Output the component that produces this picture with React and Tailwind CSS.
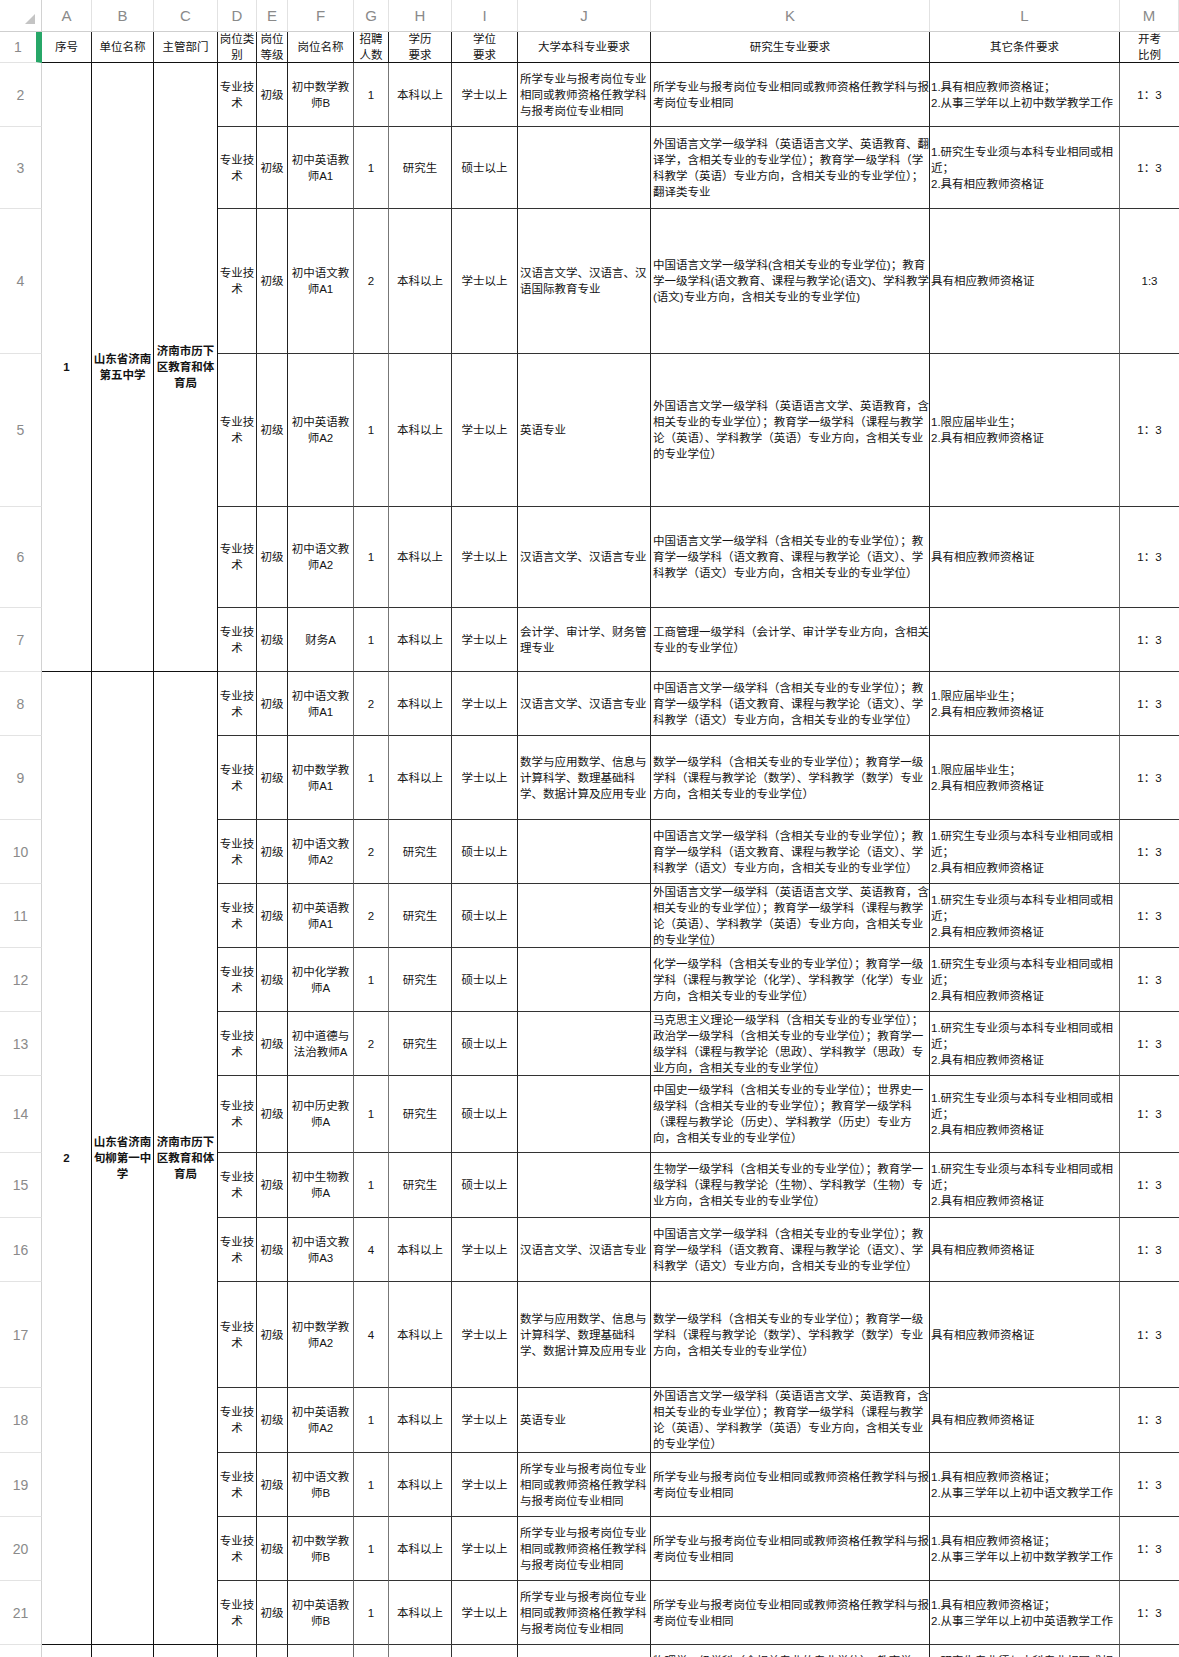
import React from 'react';

// repeated requirement texts
const SAME = '所学专业与报考岗位专业相同或教师资格任教学科与报考岗位专业相同';
const CN = '中国语言文学一级学科（含相关专业的专业学位）；教育学一级学科（语文教育、课程与教学论（语文）、学科教学（语文）专业方向，含相关专业的专业学位）';
const EN = '外国语言文学一级学科（英语语言文学、英语教育，含相关专业的专业学位）；教育学一级学科（课程与教学论（英语）、学科教学（英语）专业方向，含相关专业的专业学位）';
const MATH = '数学一级学科（含相关专业的专业学位）；教育学一级学科（课程与教学论（数学）、学科教学（数学）专业方向，含相关专业的专业学位）';
const MATH_J = '数学与应用数学、信息与计算科学、数理基础科学、数据计算及应用专业';
const CERT = '具有相应教师资格证';
const FRESH = '1.限应届毕业生；\n2.具有相应教师资格证';
const GRAD = '1.研究生专业须与本科专业相同或相近；\n2.具有相应教师资格证';

const BK = ['本科以上', '学士以上'];
const YJS = ['研究生', '硕士以上'];

const row = (n, f, g, edu, j, k, l, m = '1：3') => ({ n, d: '专业技术', e: '初级', f, g, h: edu[0], i: edu[1], j, k, l, m });

const groups = [
  {
    id: '1',
    unit: '山东省济南第五中学',
    dept: '济南市历下区教育和体育局',
    span: 'row-span-6',
    rows: [
      row(2, '初中数学教师B', '1', BK, SAME, SAME, '1.具有相应教师资格证；\n2.从事三学年以上初中数学教学工作'),
      row(3, '初中英语教师A1', '1', YJS, '', '外国语言文学一级学科（英语语言文学、英语教育、翻译学，含相关专业的专业学位）；教育学一级学科（学科教学（英语）专业方向，含相关专业的专业学位）；翻译类专业', GRAD),
      row(4, '初中语文教师A1', '2', BK, '汉语言文学、汉语言、汉语国际教育专业', '中国语言文学一级学科(含相关专业的专业学位)；教育学一级学科(语文教育、课程与教学论(语文)、学科教学(语文)专业方向，含相关专业的专业学位)', CERT, '1:3'),
      row(5, '初中英语教师A2', '1', BK, '英语专业', EN, FRESH),
      row(6, '初中语文教师A2', '1', BK, '汉语言文学、汉语言专业', CN, CERT),
      row(7, '财务A', '1', BK, '会计学、审计学、财务管理专业', '工商管理一级学科（会计学、审计学专业方向，含相关专业的专业学位）', ''),
    ],
  },
  {
    id: '2',
    unit: '山东省济南旬柳第一中学',
    dept: '济南市历下区教育和体育局',
    span: 'row-span-14',
    rows: [
      row(8, '初中语文教师A1', '2', BK, '汉语言文学、汉语言专业', CN, FRESH),
      row(9, '初中数学教师A1', '1', BK, MATH_J, MATH, FRESH),
      row(10, '初中语文教师A2', '2', YJS, '', CN, GRAD),
      row(11, '初中英语教师A1', '2', YJS, '', EN, GRAD),
      row(12, '初中化学教师A', '1', YJS, '', '化学一级学科（含相关专业的专业学位）；教育学一级学科（课程与教学论（化学）、学科教学（化学）专业方向，含相关专业的专业学位）', GRAD),
      row(13, '初中道德与法治教师A', '2', YJS, '', '马克思主义理论一级学科（含相关专业的专业学位）；政治学一级学科（含相关专业的专业学位）；教育学一级学科（课程与教学论（思政）、学科教学（思政）专业方向，含相关专业的专业学位）', GRAD),
      row(14, '初中历史教师A', '1', YJS, '', '中国史一级学科（含相关专业的专业学位）；世界史一级学科（含相关专业的专业学位）；教育学一级学科（课程与教学论（历史）、学科教学（历史）专业方向，含相关专业的专业学位）', GRAD),
      row(15, '初中生物教师A', '1', YJS, '', '生物学一级学科（含相关专业的专业学位）；教育学一级学科（课程与教学论（生物）、学科教学（生物）专业方向，含相关专业的专业学位）', GRAD),
      row(16, '初中语文教师A3', '4', BK, '汉语言文学、汉语言专业', CN, CERT),
      row(17, '初中数学教师A2', '4', BK, MATH_J, MATH, CERT),
      row(18, '初中英语教师A2', '1', BK, '英语专业', EN, CERT),
      row(19, '初中语文教师B', '1', BK, SAME, SAME, '1.具有相应教师资格证；\n2.从事三学年以上初中语文教学工作'),
      row(20, '初中数学教师B', '1', BK, SAME, SAME, '1.具有相应教师资格证；\n2.从事三学年以上初中数学教学工作'),
      row(21, '初中英语教师B', '1', BK, SAME, SAME, '1.具有相应教师资格证；\n2.从事三学年以上初中英语教学工作'),
    ],
  },
];

// row 22 is only a sliver at the bottom edge: just the tall texts peek in
const lastRow = {
  n: '', d: '', e: '', f: '', g: '', h: '', i: '', j: '', m: '',
  k: '物理学一级学科（含相关专业的专业学位）；教育学一级学科（课程与教学论（物理）、学科教学（物理）专业方向，含相关专业的专业学位）',
  l: GRAD,
};

const letters = ['A', 'B', 'C', 'D', 'E', 'F', 'G', 'H', 'I', 'J', 'K', 'L', 'M'];

const cols = [
  { k: 'd', cls: 'justify-center text-center border-r-[#222]' },
  { k: 'e', cls: 'justify-center text-center border-r-[#222]' },
  { k: 'f', cls: 'justify-center text-center border-r-[#666]' },
  { k: 'g', cls: 'justify-center text-center border-r-[#777]' },
  { k: 'h', cls: 'justify-center text-center border-r-[#333]' },
  { k: 'i', cls: 'justify-center text-center border-r-[#222]' },
  { k: 'j', cls: 'justify-start text-left pl-[2px] border-r-[#222]' },
  { k: 'k', cls: 'justify-start text-left pl-[2px] border-r-[#222]' },
  { k: 'l', cls: 'justify-start text-left pl-[1px] border-r-[#666]' },
  { k: 'm', cls: 'justify-center text-center border-r-0' },
];

const headers = [
  { t: '序号', cls: 'justify-center' },
  { t: '单位名称', cls: 'justify-center' },
  { t: '主管部门', cls: 'justify-center' },
  { t: '岗位类\n别', cls: 'justify-center' },
  { t: '岗位\n等级', cls: 'justify-center' },
  { t: '岗位名称', cls: 'justify-center' },
  { t: '招聘\n人数', cls: 'justify-center' },
  { t: '学历\n要求', cls: 'justify-center' },
  { t: '学位\n要求', cls: 'justify-center' },
  { t: '大学本科专业要求', cls: 'justify-center' },
  { t: '研究生专业要求', cls: 'justify-center' },
  { t: '其它条件要求', cls: 'justify-center' },
  { t: '开考\n比例', cls: 'justify-center border-r-0' },
];

const RowNum = ({ n }) => (
  <div className="flex items-center justify-center border-r border-b border-r-[#d2d2d2] border-b-[#e3e3e3] text-[14px] text-[#8a8a8a] font-['Liberation_Sans',sans-serif]">
    {n}
  </div>
);

const DataRow = ({ r, lead }) => (
  <>
    <RowNum n={r.n} />
    {lead}
    {cols.map((c) => (
      <div
        key={c.k}
        className={`flex items-center overflow-hidden border-r border-b border-b-[#333] ${c.cls}`}
      >
        <span className="whitespace-pre-line">{r[c.k]}</span>
      </div>
    ))}
  </>
);

export default function App() {
  return (
    <div className="w-[1179px] h-[1657px] overflow-hidden bg-white text-[#141414] text-[11.5px] leading-[16px] font-['Liberation_Sans','Noto_Sans_CJK_SC',sans-serif]">
      <div className="grid grid-cols-[42px_50px_62px_64px_39px_31px_66px_35px_63px_66px_133px_279px_190px_59px] grid-rows-[32px_31px_64px_82px_145px_153px_101px_64px_64px_84px_64px_64px_64px_64px_77px_65px_64px_106px_65px_64px_64px_64px_64px]">
        {/* column letters */}
        <div className="relative border-r border-b border-r-[#d2d2d2] border-b-[#cfcfcf]">
          <svg className="absolute right-[6px] bottom-[7px]" width="10" height="10" viewBox="0 0 10 10">
            <polygon points="10,0 10,10 0,10" fill="#c4c4c4" />
          </svg>
        </div>
        {letters.map((l) => (
          <div
            key={l}
            className="flex items-center justify-center border-r border-b border-r-[#e2e2e2] border-b-[#cfcfcf] text-[15px] text-[#8a8a8a] font-['Liberation_Sans',sans-serif]"
          >
            {l}
          </div>
        ))}

        {/* header row */}
        <div className="flex items-center justify-center border-r-[6px] border-b border-r-[#27a768] border-b-[#e3e3e3] text-[14px] text-[#8a8a8a] font-['Liberation_Sans',sans-serif]">
          1
        </div>
        {headers.map((h) => (
          <div
            key={h.t}
            className={`flex items-center text-center border-r border-b border-r-[#222] border-b-[#111] ${h.cls}`}
          >
            <span className="whitespace-pre-line">{h.t}</span>
          </div>
        ))}

        {/* data rows */}
        {groups.map((g) =>
          g.rows.map((r, idx) => (
            <DataRow
              key={r.n}
              r={r}
              lead={
                idx === 0 && (
                  <>
                    <div className={`${g.span} flex items-center justify-center font-bold border-r border-b border-r-[#111] border-b-[#111]`}>
                      {g.id}
                    </div>
                    <div className={`${g.span} flex items-center justify-center text-center font-bold border-r border-b border-r-[#111] border-b-[#111]`}>
                      <span>{g.unit}</span>
                    </div>
                    <div className={`${g.span} flex items-center justify-center text-center font-bold border-r border-b border-r-[#111] border-b-[#111]`}>
                      <span>{g.dept}</span>
                    </div>
                  </>
                )
              }
            />
          ))
        )}

        {/* partially visible last row */}
        <DataRow
          r={lastRow}
          lead={
            <>
              <div className="border-r border-b border-r-[#111] border-b-[#111]" />
              <div className="border-r border-b border-r-[#111] border-b-[#111]" />
              <div className="border-r border-b border-r-[#111] border-b-[#111]" />
            </>
          }
        />
      </div>
    </div>
  );
}
